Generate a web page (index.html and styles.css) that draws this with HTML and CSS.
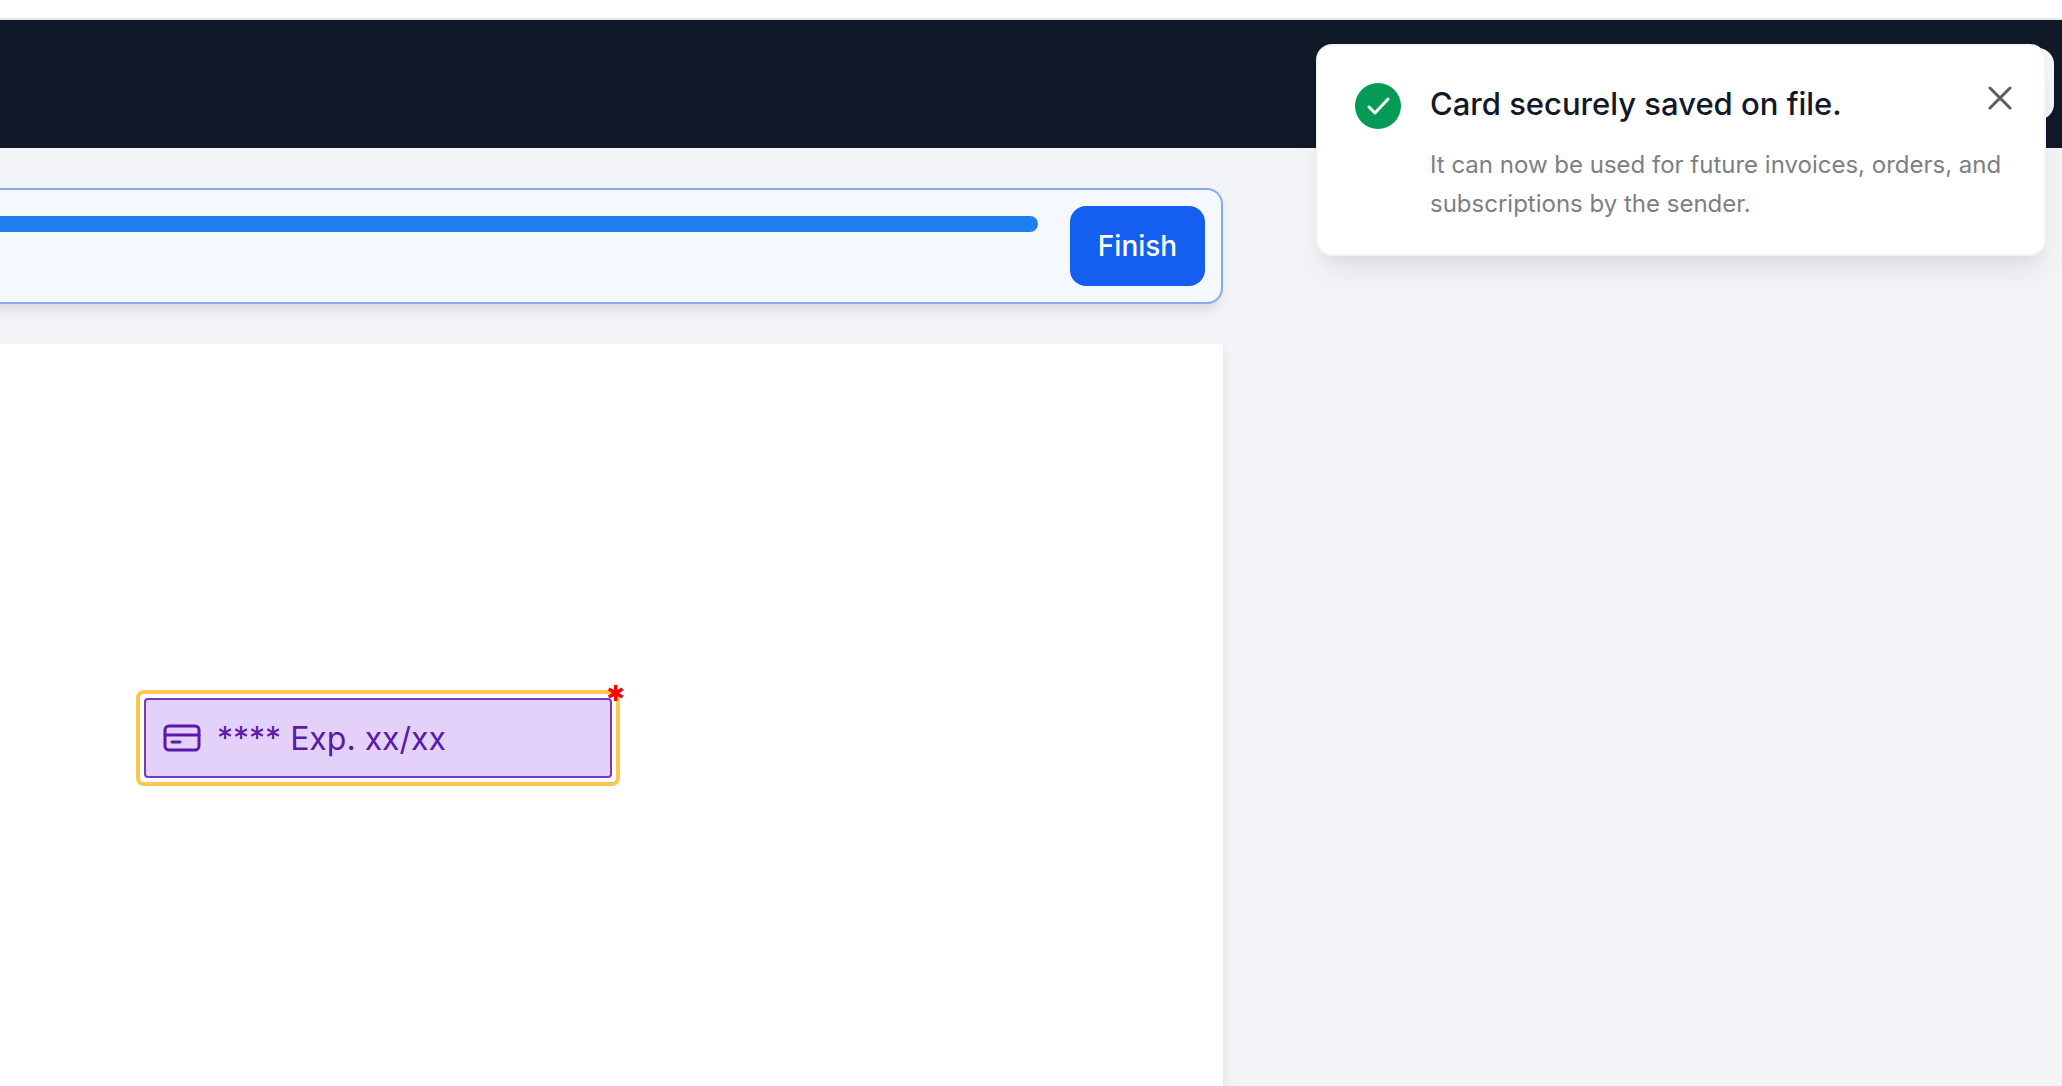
FILE: index.html
```html
<!DOCTYPE html>
<html lang="en">
<head>
  <meta charset="UTF-8">
  <meta name="viewport" content="width=device-width, initial-scale=1.0">
  <title>Complete Document</title>
  <link rel="stylesheet" href="styles.css">
</head>
<body>
  <header class="topbar">
    <button class="menu-button" type="button" aria-label="Menu"></button>
  </header>

  <div class="layout">
    <main class="content">
      <div class="progress-card">
        <div class="progress-track">
          <div class="progress-fill"></div>
        </div>
        <button class="finish-button" type="button">Finish</button>
      </div>

      <section class="page">
        <div class="field-ring">
          <button class="card-field" type="button">
            <svg class="card-icon" viewBox="0 0 38 28" fill="none" stroke="currentColor" stroke-width="3" stroke-linecap="round">
              <rect x="2" y="2" width="34" height="24" rx="4"/>
              <path d="M2 11h34"/>
              <path d="M9 18h8"/>
            </svg>
            <span>**** Exp. xx/xx</span>
          </button>
          <span class="required">✱</span>
        </div>
      </section>
    </main>
  </div>

  <div class="toast" role="status">
    <svg class="toast-icon" viewBox="0 0 46 46">
      <circle cx="23" cy="23" r="23" fill="#059a55"/>
      <path d="M14 24l6 6L33 16" fill="none" stroke="#fff" stroke-width="3" stroke-linecap="round" stroke-linejoin="round"/>
    </svg>
    <div class="toast-body">
      <h2 class="toast-title">Card securely saved on file.</h2>
      <p class="toast-text">It can now be used for future invoices, orders, and subscriptions by the sender.</p>
    </div>
    <button class="toast-close" type="button" aria-label="Close">
      <svg viewBox="0 0 24 24" fill="none" stroke="currentColor" stroke-width="3" stroke-linecap="round">
        <path d="M2 2l20 20M22 2L2 22"/>
      </svg>
    </button>
  </div>
</body>
</html>
```
FILE: styles.css
```css
* {
  box-sizing: border-box;
}

body {
  margin: 0;
  min-height: 100vh;
  display: flex;
  flex-direction: column;
  border-top: 18px solid #fff;
  background-color: #f3f4f8;
  font-family: Inter, "Liberation Sans", sans-serif;
}

button {
  padding: 0;
  border: none;
  font-family: inherit;
  cursor: pointer;
}

.topbar {
  display: flex;
  justify-content: flex-end;
  align-items: center;
  height: 130px;
  padding-right: 8px;
  border-top: 2px solid #e5e7eb;
  background-color: #111827;
}

.menu-button {
  width: 72px;
  height: 72px;
  border-radius: 16px;
  background-color: #f3f6fd;
}

.layout {
  flex: 1;
  display: grid;
  grid-template-columns: 35fr 24fr;
}

.content {
  display: flex;
  flex-direction: column;
  gap: 40px;
  padding-top: 40px;
}

/* the card runs past the left edge of the window */
.progress-card {
  display: flex;
  align-items: flex-start;
  gap: 32px;
  margin-left: -32px;
  padding: 16px;
  border: 2px solid #87abee;
  border-radius: 16px;
  background-color: #f5f8ff;
  box-shadow: 0 8px 12px -2px rgba(0, 0, 0, 0.1);
}

.progress-track {
  flex: 1;
  margin-top: 10px;
}

.progress-fill {
  height: 16px;
  border-radius: 8px;
  background-color: #2080f0;
}

/* keeps the rounded start of the fill out of view */
.progress-card .progress-fill {
  margin-left: -8px;
}

.finish-button {
  height: 80px;
  padding: 0 28px;
  border-radius: 16px;
  background-color: #145ef0;
  color: #fff;
  font-size: 28px;
  font-weight: 500;
}

.page {
  position: relative;
  flex: 1;
  background-color: #fff;
  box-shadow: 0 8px 12px rgba(0, 0, 0, 0.1);
}

/* field placed on the document */
.field-ring {
  position: absolute;
  top: 346px;
  left: 136px;
  width: 484px;
  padding: 4px;
  border: 4px solid #fcc651;
  border-radius: 8px;
}

.card-field {
  display: flex;
  align-items: center;
  gap: 16px;
  width: 100%;
  height: 80px;
  padding: 0 17px;
  border: 2px solid #7938c2;
  border-radius: 4px;
  background-color: #e3d1f9;
  color: #5b18ab;
  font-size: 32px;
}

.card-icon {
  width: 38px;
  height: 28px;
}

.required {
  position: absolute;
  top: -14px;
  right: -9px;
  color: #f00;
  font-family: "DejaVu Sans", sans-serif;
  font-size: 22px;
  font-weight: 700;
  line-height: 28px;
}

.toast {
  position: absolute;
  top: 44px;
  right: 16px;
  display: flex;
  align-items: flex-start;
  width: 730px;
  padding: 37px 37px 31px;
  border: 2px solid #f3f4f6;
  border-radius: 16px;
  background-color: #fff;
  box-shadow: 0 20px 30px -6px rgba(0, 0, 0, 0.08), 0 8px 12px -4px rgba(0, 0, 0, 0.04);
}

.toast-icon {
  flex: none;
  width: 46px;
  height: 46px;
  margin-right: 29px;
}

.toast-title {
  margin: 0 0 20px;
  color: #111827;
  font-size: 31px;
  font-weight: 500;
  line-height: 42px;
}

.toast-text {
  margin: 0;
  color: #7c7f83;
  font-size: 24px;
  line-height: 39px;
}

.toast-close {
  position: absolute;
  top: 40px;
  right: 32px;
  width: 24px;
  height: 24px;
  background: none;
  color: #5a5d61;
}

.toast-close svg {
  display: block;
}
```
